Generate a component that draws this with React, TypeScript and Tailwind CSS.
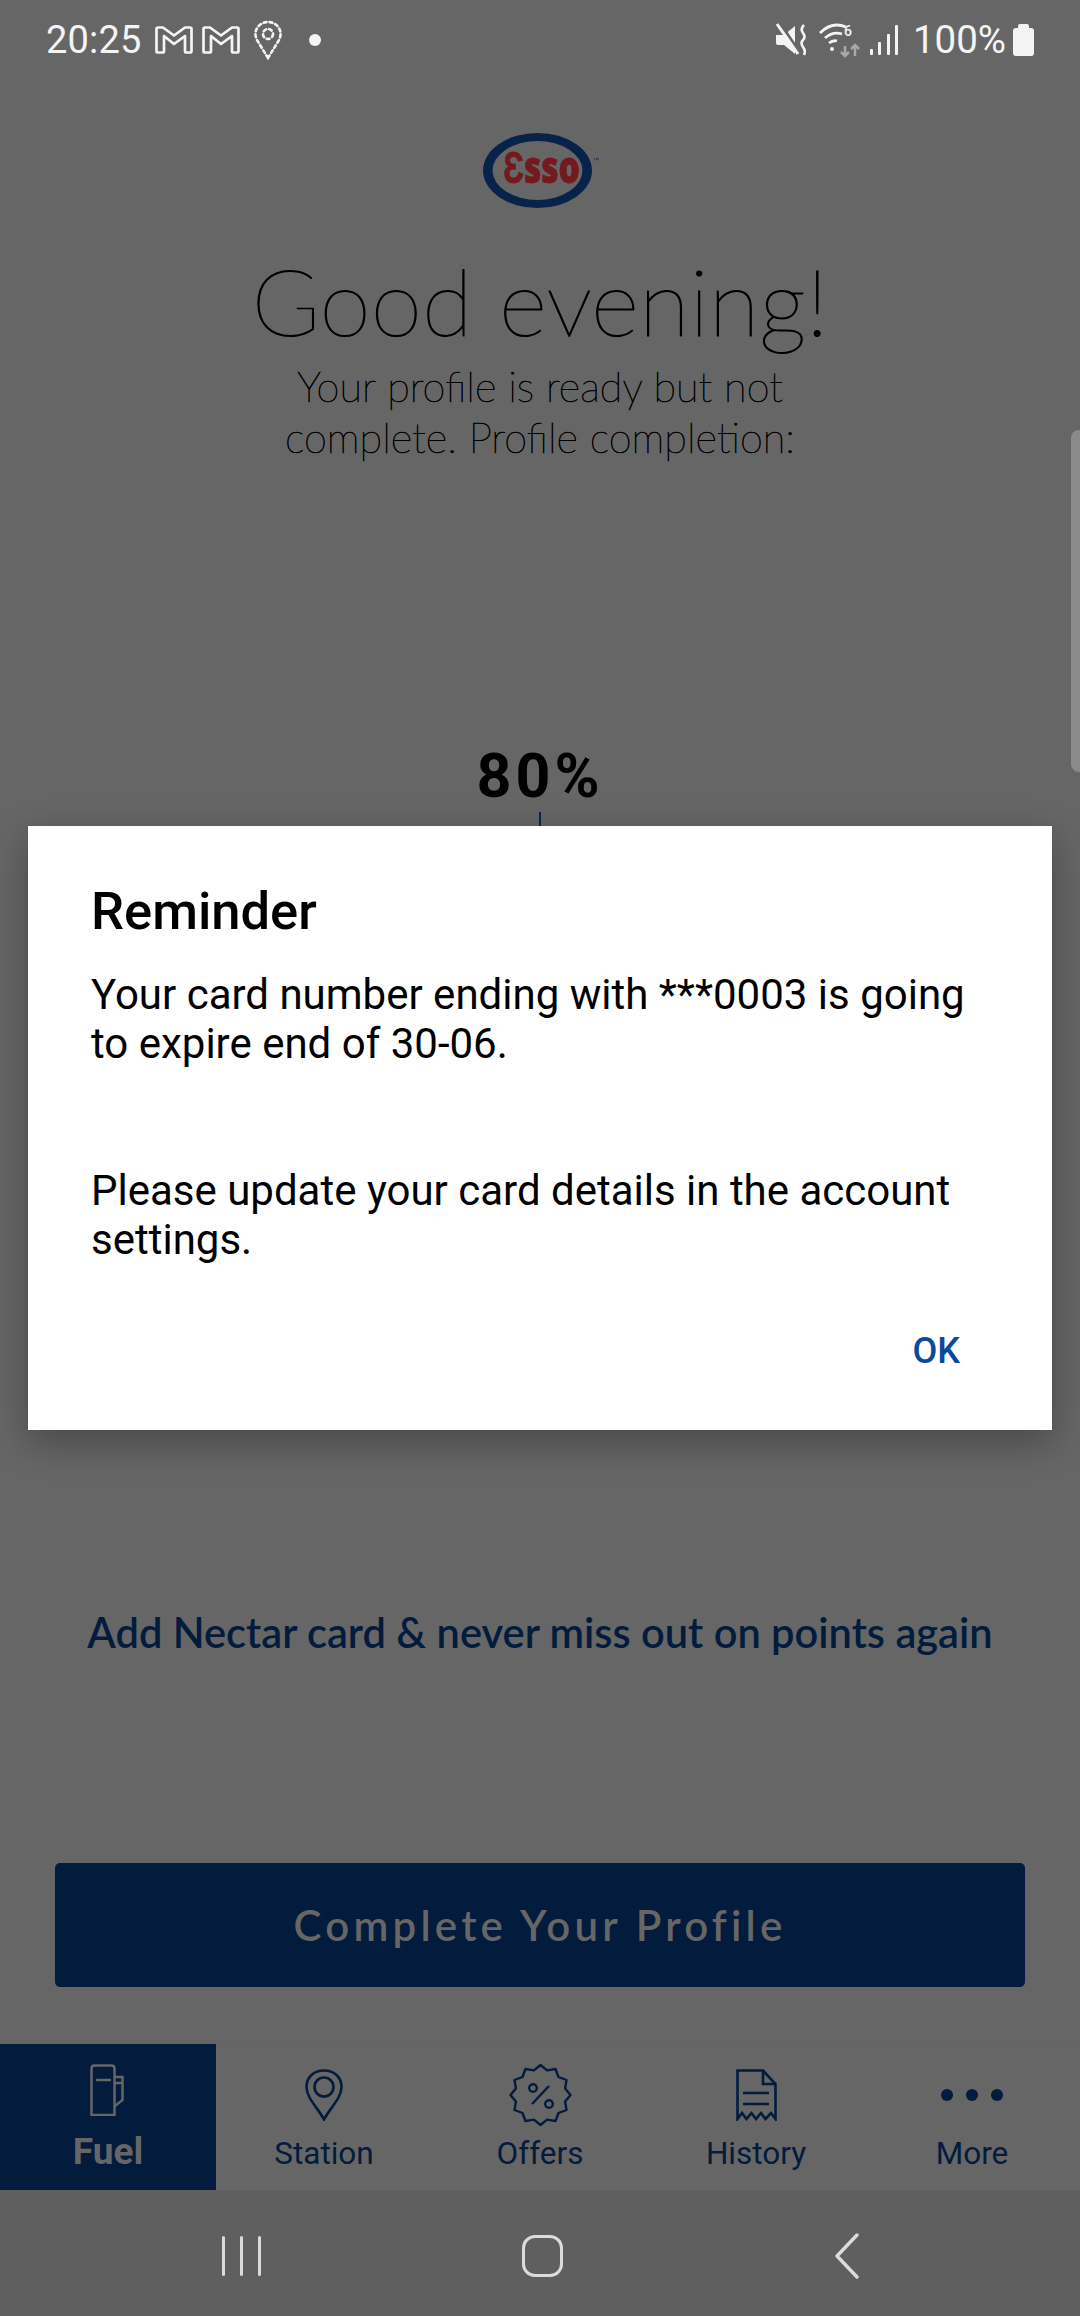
import React from "react";

const navy = "#031b3d";

const starPoints = Array.from({ length: 24 }, (_, i) => {
  const a = (i * Math.PI) / 12 - Math.PI / 2;
  const r = i % 2 === 0 ? 30 : 25.5;
  return `${(31.5 + r * Math.cos(a)).toFixed(1)},${(31 + r * Math.sin(a)).toFixed(1)}`;
}).join(" ");

function Mail() {
  return (
    <svg width="38" height="30" viewBox="0 0 38 30" fill="none" stroke="#f4f4f4" strokeWidth="2.7" strokeLinejoin="round">
      <path d="M3 2.500h5l11 8 11-8h5q1.500 0 1.500 1.500v22q0 1.500-1.500 1.500h-3.500q-1.500 0-1.500-1.500V11L19 19 9 11v15q0 1.500-1.500 1.500H3Q1.500 27.500 1.500 26V4Q1.500 2.500 3 2.500Z" />
    </svg>
  );
}

function Esso() {
  return (
    <svg className="blur-[0.5px]" width="120" height="76" viewBox="0 0 120 76">
      <ellipse cx="54.500" cy="37.500" rx="54.500" ry="37.500" fill="#08234a" />
      <ellipse cx="54.500" cy="37.500" rx="45" ry="29.500" fill="#666666" />
      <text transform="translate(20 50) scale(0.76 1)" fontFamily="'Open Sans', sans-serif" fontWeight="800" fontSize="44" stroke="#741a1e" strokeWidth="0.8" fill="#741a1e">Ɛsso</text>
      <text x="110" y="29" fontFamily="'Liberation Sans', sans-serif" fontSize="6" fill="#08234a">™</text>
    </svg>
  );
}

function NavItem({ label, active, children }: { label: string; active?: boolean; children: React.ReactNode }) {
  return (
    <div className={active ? "flex h-full w-[216px] flex-col items-center bg-[#031b3d] text-[#666666]" : "flex h-full w-[216px] flex-col items-center text-[#031b3d]"}>
      <div className="flex h-[84px] items-start justify-center">{children}</div>
      <div className={active ? "mt-[3px] text-[37px] leading-[42px] font-bold" : "mt-[7px] text-[31.5px] leading-[38px]"}>{label}</div>
    </div>
  );
}

export default function App() {
  return (
    <div className="relative h-[2316px] w-[1080px] overflow-hidden bg-[#666666] font-['Roboto',sans-serif]">
      {/* status bar */}
      <div className="flex h-[80px] items-center justify-between pr-[46px] pl-[46px] text-[#f4f4f4]">
        <div className="flex items-center">
          <span className="text-[38px] leading-none tracking-[0.2px]">20:25</span>
          <span className="ml-[13px]"><Mail /></span>
          <span className="ml-[9px]"><Mail /></span>
          <svg className="ml-[13px]" width="30" height="40" viewBox="0 0 30 40" fill="none" stroke="#f4f4f4" strokeWidth="2.600" strokeLinecap="round" strokeDasharray="3 3">
            <path d="M15 38 4 20C-1 10 7 2 15 2s16 8 11 18Z" />
            <circle cx="15" cy="14" r="5" />
          </svg>
          <span className="ml-[26px] h-[12px] w-[12px] rounded-full bg-[#f4f4f4]" />
        </div>
        <div className="flex items-center">
          <svg width="34" height="34" viewBox="0 0 34 34" fill="none">
            <path d="M1 12h8l11-9v28L9 22H3q-2 0-2-2Z" fill="#f4f4f4" />
            <path d="M5 0 25 30" stroke="#666666" strokeWidth="3" />
            <path d="M2 1 23 31" stroke="#f4f4f4" strokeWidth="3" />
            <path d="M29 2q-4 4-1 8t0 7 0 7 1 8" stroke="#f4f4f4" strokeWidth="2.600" />
          </svg>
          <svg className="ml-[10px]" width="42" height="36" viewBox="0 0 42 36" fill="none">
            <path d="M1 11Q13-1 27 5M6 16q8-7 17-4M10 21q4-3 8-2" stroke="#f4f4f4" strokeWidth="2.800" />
            <circle cx="13" cy="27" r="2" fill="#f4f4f4" />
            <path d="M26 24v10m-4-4 4 4 4-4M36 34V23m-4 4 4-4 4 4" stroke="#a8a8a8" strokeWidth="2.500" />
            <text x="25" y="14" fontFamily="Roboto, sans-serif" fontSize="14" fontWeight="500" fill="#f4f4f4">6</text>
          </svg>
          <svg className="ml-[8px]" width="30" height="32" viewBox="0 0 30 32" fill="#f4f4f4">
            <rect x="1" y="25" width="3" height="6" rx="1" />
            <rect x="9" y="18" width="3" height="13" rx="1" />
            <rect x="18" y="10" width="3" height="21" rx="1" />
            <rect x="26" y="1" width="3" height="30" rx="1" />
          </svg>
          <span className="ml-[14px] text-[38.5px] leading-none">100%</span>
          <span className="relative mt-[3px] ml-[7px] h-[28px] w-[21px] rounded-[3px] bg-[#f4f4f4] before:absolute before:-top-[4px] before:left-[5px] before:h-[5px] before:w-[11px] before:rounded-t-[2px] before:bg-[#f4f4f4]" />
        </div>
      </div>

      {/* content */}
      <div className="flex flex-col items-center">
        <div className="mt-[53px] ml-[6px] flex h-[76px] justify-center"><Esso /></div>
        <h1 className="mt-[36px] font-['Lato',sans-serif] text-[93px] leading-[110px] font-extralight text-black [-webkit-text-stroke:1.1px_black]">Good evening!</h1>
        <p className="mt-[6px] w-[580px] text-center font-['Lato',sans-serif] text-[41.5px] leading-[51px] font-extralight text-black [-webkit-text-stroke:0.7px_black]">Your profile is ready but not complete. Profile completion:</p>
        <div className="mt-[283px] text-[61px] leading-[60px] font-bold tracking-[4px] text-black">80%</div>
        <div className="mt-[6px] h-[14px] w-[2px] bg-[#0a2650]" />
        <div className="mt-[781px] font-['Lato',sans-serif] text-[41.6px] leading-[50px] font-semibold text-[#031b3d]">Add Nectar card &amp; never miss out on points again</div>
        <button className="mt-[206px] flex h-[124px] w-[970px] items-center justify-center rounded-[5px] bg-[#031b3d] font-['Lato',sans-serif] text-[42px] font-semibold tracking-[4.200px] text-[#666666]">Complete Your Profile</button>
      </div>

      {/* bottom navigation */}
      <div className="absolute top-[2043px] left-0 flex h-[147px] w-[1080px] border-t border-[#626262]">
        <NavItem label="Fuel" active>
          <svg className="mt-[20px] -ml-[3px]" width="34" height="52" viewBox="0 0 34 52" fill="none" stroke="#666666" strokeWidth="2.500">
            <path d="M1.500 51V4.500q0-3 3-3h17q3 0 3 3V51Z" />
            <path d="M6 16h15M25 13h7.500v23L25 42M25 19h7.500" />
          </svg>
        </NavItem>
        <NavItem label="Station">
          <svg className="mt-[25px]" width="38" height="52" viewBox="0 0 38 52" fill="none" stroke={navy} strokeWidth="2.600">
            <path d="M19 50.500C13 39 1.500 29 1.500 18 1.500 8 9 1.500 19 1.500S36.500 8 36.500 18C36.500 29 25 39 19 50.500Z" />
            <circle cx="19" cy="18" r="9.500" />
          </svg>
        </NavItem>
        <NavItem label="Offers">
          <svg className="mt-[20px]" width="63" height="62" viewBox="0 0 63 62" fill="none" stroke={navy} strokeWidth="2.400" strokeLinejoin="round">
            <polygon points={starPoints} />
            <path d="M40 22 23 40" />
            <circle cx="24" cy="24" r="3.800" />
            <circle cx="40" cy="40" r="3.800" />
          </svg>
        </NavItem>
        <NavItem label="History">
          <svg className="mt-[25px]" width="41" height="52" viewBox="0 0 41 52" fill="none" stroke={navy} strokeWidth="2.600">
            <path d="M1.500 50V1.500H27L39.500 15V50l-4.500-6-5.500 6-4.500-6-5 6-4.500-6-5 6-4.500-6Z" />
            <path d="M27 1.500V15h12.500M7 24h26M7 35h26" />
          </svg>
        </NavItem>
        <NavItem label="More">
          <svg className="mt-[24px]" width="64" height="54" viewBox="0 0 64 54" fill={navy}>
            <circle cx="7" cy="27" r="6" />
            <circle cx="32" cy="27" r="6" />
            <circle cx="57" cy="27" r="6" />
          </svg>
        </NavItem>
      </div>

      {/* system navigation */}
      <div className="absolute top-[2190px] left-0 flex h-[126px] w-[1080px] items-center bg-[#5f5f5f] pt-[6px]">
        <div className="flex w-[360px] justify-center gap-[15px] pl-[122px]">
          <span className="h-[40px] w-[3px] rounded-full bg-[#dcdcdc]" />
          <span className="h-[40px] w-[3px] rounded-full bg-[#dcdcdc]" />
          <span className="h-[40px] w-[3px] rounded-full bg-[#dcdcdc]" />
        </div>
        <div className="flex w-[360px] justify-center">
          <span className="ml-[5px] h-[42px] w-[41px] rounded-[13px] border-[3.500px] border-[#dcdcdc]" />
        </div>
        <svg className="ml-[114px]" width="25" height="46" viewBox="0 0 25 46" fill="none" stroke="#dcdcdc" strokeWidth="3.400" strokeLinecap="round" strokeLinejoin="round">
          <path d="M23 2 3 23l20 21" />
        </svg>
      </div>

      {/* scrollbar hint */}
      <div className="absolute top-[430px] right-0 h-[342px] w-[9px] rounded-l-[8px] bg-[#8a8a8a]" />

      {/* dialog */}
      <div className="absolute top-[826px] left-[28px] flex h-[604px] w-[1024px] flex-col bg-white pt-[57px] pr-[92px] pl-[63px] shadow-[0_12px_36px_rgba(0,0,0,0.3)]">
        <h2 className="text-[52.5px] leading-[56px] font-medium text-black">Reminder</h2>
        <div className="mt-[31px] -mr-[20px] text-[42px] leading-[49px] text-black">
          <p>Your card number ending with ***0003 is going to expire end of 30-06.</p>
          <p className="mt-[98px]">Please update your card details in the account settings.</p>
        </div>
        <div className="mt-[66px] self-end text-[36px] leading-[42px] font-medium text-[#0a4a9c]">OK</div>
      </div>
    </div>
  );
}
